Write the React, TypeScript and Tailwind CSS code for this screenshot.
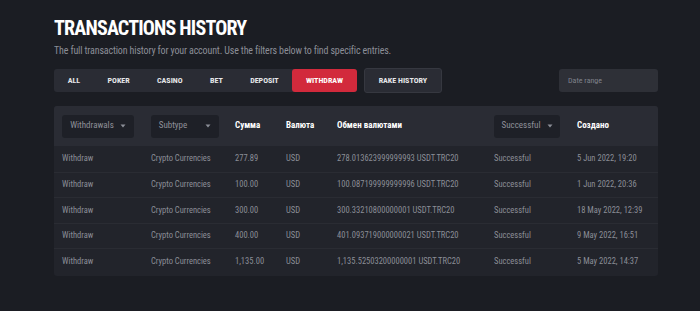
import React from "react";

const rows = [
  ["Withdraw", "Crypto Currencies", "277.89", "USD", "278.013623999999993 USDT.TRC20", "Successful", "5 Jun 2022, 19:20"],
  ["Withdraw", "Crypto Currencies", "100.00", "USD", "100.087199999999996 USDT.TRC20", "Successful", "1 Jun 2022, 20:36"],
  ["Withdraw", "Crypto Currencies", "300.00", "USD", "300.33210800000001 USDT.TRC20", "Successful", "18 May 2022, 12:39"],
  ["Withdraw", "Crypto Currencies", "400.00", "USD", "401.093719000000021 USDT.TRC20", "Successful", "9 May 2022, 16:51"],
  ["Withdraw", "Crypto Currencies", "1,135.00", "USD", "1,135.52503200000001 USDT.TRC20", "Successful", "5 May 2022, 14:37"],
];

const tabs = ["ALL", "POKER", "CASINO", "BET", "DEPOSIT", "WITHDRAW"];

function Caret() {
  return (
    <svg width="6" height="4" viewBox="0 0 6 4" className="shrink-0">
      <path d="M0.5 0.5 L5.5 0.5 L3 3.5 Z" fill="#8b8e97" />
    </svg>
  );
}

function Dropdown({ label, w, gap }: { label: string; w: string; gap: string }) {
  return (
    <div className={`flex h-[23px] items-center justify-center rounded-[3px] bg-[#1e2027] text-[9px] font-normal text-[#8e9099] ${w} ${gap}`}>
      <span>{label}</span>
      <Caret />
    </div>
  );
}

const grid = "grid grid-cols-[89px_84px_51px_51px_157px_83px_1fr] px-2";

export default function App() {
  return (
    <div className="min-h-[311px] w-[700px] bg-[#1b1d23] pl-[54px] pt-[16px] font-['Roboto',sans-serif] [font-stretch:87.5%]">
      <h1 className="text-[20px] font-bold leading-[24px] tracking-[-0.8px] text-white [font-stretch:75%]">TRANSACTIONS HISTORY</h1>
      <p className="mt-[5px] text-[10px] leading-[12px] tracking-[-0.15px] text-[#8b8e97]">
        The full transaction history for your account. Use the filters below to find specific entries.
      </p>
      <div className="mt-[11px] flex h-[25px] w-[604px] items-center">
        <div className="flex h-[23px] rounded-[3px] bg-[#2a2c34]">
          {tabs.map((t) => (
            <div
              key={t}
              className={`flex items-center px-[13.7px] text-[8px] font-bold ${
                t === "WITHDRAW" ? "rounded-[3px] bg-[#d22a3c] text-white" : "text-[#e6e7ea]"
              }`}
            >
              {t}
            </div>
          ))}
        </div>
        <div className="ml-[7px] flex h-[25px] items-center rounded-[3px] border border-[#363840] bg-[#2a2c34] px-[14px] text-[8px] font-bold text-[#e6e7ea]">
          RAKE HISTORY
        </div>
        <div className="ml-auto flex h-[23px] w-[99px] items-center rounded-[3px] bg-[#2e3037] px-[9px] text-[8px] text-[#7f828b]">
          Date range
        </div>
      </div>
      <div className="mt-[13px] w-[604px] rounded-[3px] bg-[#22242b] pb-[2px]">
        <div className={`${grid} h-[40px] items-center rounded-t-[3px] bg-[#2a2c34] text-[9px] font-bold text-white`}>
          <Dropdown label="Withdrawals" w="w-[72px]" gap="gap-[6px]" />
          <Dropdown label="Subtype" w="w-[68px]" gap="gap-[18px]" />
          <div>Сумма</div>
          <div>Валюта</div>
          <div>Обмен валютами</div>
          <Dropdown label="Successful" w="w-[66px]" gap="gap-[6px]" />
          <div>Создано</div>
        </div>
        {rows.map((r, i) => (
          <div
            key={i}
            className={`${grid} h-[25.5px] items-center text-[8.5px] text-[#8b8e97] ${i > 0 ? "border-t border-[#2a2c33]" : ""}`}
          >
            {r.map((c, j) => (
              <div key={j} className="whitespace-nowrap">
                {c}
              </div>
            ))}
          </div>
        ))}
      </div>
    </div>
  );
}
